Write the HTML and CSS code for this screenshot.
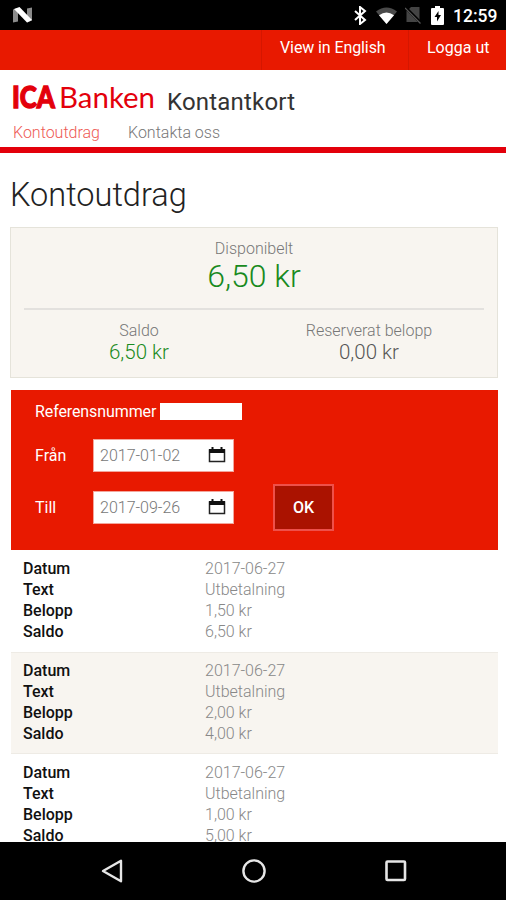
FILE: index.html
```html
<!DOCTYPE html>
<html lang="sv">
<head>
<meta charset="utf-8">
<title>Kontoutdrag</title>
<link rel="stylesheet" href="styles.css">
</head>
<body>
<div class="status">
  <svg class="status-n" width="20" height="16" viewBox="0 0 20 16"><path d="M0 2.500 5 1v13.500L0 15.500zM14 1.500l5-1v13l-5 2z" fill="#8b8b8b"/><path d="M1 2 6.500 0 19 13l-5 2.500z" fill="#fff"/></svg>
  <div class="status-icons">
    <svg width="13" height="19" viewBox="0 0 13 19"><path d="M1 5l10 9-5 4V1l5 4L1 14" fill="none" stroke="#fff" stroke-width="2"/></svg>
    <svg class="wifi" width="21" height="17" viewBox="0 0 21 17"><path d="M0 4.500Q10.500-3.500 21 4.500L10.500 17z" fill="#4a4a4a"/><path d="M3 8.200Q10.500 3 18 8.200L10.500 17z" fill="#fff"/></svg>
    <svg class="sim" width="17" height="18" viewBox="0 0 17 18"><path d="M6 1h8.500v15H1.500V5.500z" fill="#444"/><path d="M0 1l16 16" stroke="#000" stroke-width="3"/><path d="M0 2l15.500 15.500" stroke="#555" stroke-width="1.200"/></svg>
    <svg class="battery" width="13" height="19" viewBox="0 0 13 19"><path d="M4 0h5v2h3q1 0 1 1v15q0 1-1 1H1q-1 0-1-1V3q0-1 1-1h3z" fill="#fff"/><path d="M7.500 5 3.500 11h2.500v4.500l4-6.500H7.500z" fill="#000"/></svg>
    <span class="clock">12:59</span>
  </div>
</div>
<nav class="topbar">
  <a class="lang">View in English</a>
  <a class="logout">Logga ut</a>
</nav>
<header class="header">
  <div class="brand">
    <svg class="logo" width="144" height="36" viewBox="0 0 144 36"><text class="ica" x="0" y="25" textLength="43" lengthAdjust="spacingAndGlyphs">ICA</text><text class="banken" x="47" y="25" textLength="96" lengthAdjust="spacingAndGlyphs">Banken</text></svg>
    <span class="product">Kontantkort</span>
  </div>
  <div class="tabs"><a class="tab active">Kontoutdrag</a><a class="tab oss">Kontakta oss</a></div>
</header>
<main class="main">
  <h1 class="title">Kontoutdrag</h1>
  <section class="balance">
    <div class="available"><div class="label">Disponibelt</div><div class="amount big">6,50 kr</div></div>
    <div class="split">
      <div class="cell"><div class="label">Saldo</div><div class="amount">6,50 kr</div></div>
      <div class="cell"><div class="label wide">Reserverat belopp</div><div class="amount plain">0,00 kr</div></div>
    </div>
  </section>
  <section class="filter">
    <div class="ref"><span class="ref-label">Referensnummer</span><span class="ref-value"></span></div>
    <div class="field"><span class="name">Från</span>
      <span class="date">2017-01-02<svg width="18" height="18" viewBox="0 0 18 18"><path d="M1.500 4h15v11.500h-15z" fill="none" stroke="#222" stroke-width="1.500"/><path d="M1 3h16v4H1z" fill="#111"/><path d="M4.500 1v3M13.500 1v3" stroke="#111" stroke-width="2"/></svg></span></div>
    <div class="field second"><span class="name">Till</span>
      <span class="date">2017-09-26<svg width="18" height="18" viewBox="0 0 18 18"><path d="M1.500 4h15v11.500h-15z" fill="none" stroke="#222" stroke-width="1.500"/><path d="M1 3h16v4H1z" fill="#111"/><path d="M4.500 1v3M13.500 1v3" stroke="#111" stroke-width="2"/></svg></span>
      <button class="ok">OK</button></div>
  </section>
  <dl class="record"><dt>Datum</dt><dd>2017-06-27</dd><dt>Text</dt><dd class="desc">Utbetalning</dd><dt>Belopp</dt><dd>1,50 kr</dd><dt>Saldo</dt><dd>6,50 kr</dd></dl>
  <dl class="record alt"><dt>Datum</dt><dd>2017-06-27</dd><dt>Text</dt><dd class="desc">Utbetalning</dd><dt>Belopp</dt><dd>2,00 kr</dd><dt>Saldo</dt><dd>4,00 kr</dd></dl>
  <dl class="record"><dt>Datum</dt><dd>2017-06-27</dd><dt>Text</dt><dd class="desc">Utbetalning</dd><dt>Belopp</dt><dd>1,00 kr</dd><dt>Saldo</dt><dd>5,00 kr</dd></dl>
</main>
<footer class="navbar">
  <svg width="22" height="24" viewBox="0 0 22 24"><path d="M20 1.800v20.400L2 12z" fill="none" stroke="#e6e6e6" stroke-width="2.400" stroke-linejoin="round"/></svg>
  <svg width="24" height="24" viewBox="0 0 24 24"><circle cx="12" cy="12" r="10.600" fill="none" stroke="#e6e6e6" stroke-width="2.400"/></svg>
  <svg width="22" height="22" viewBox="0 0 22 22"><rect x="1.500" y="1.500" width="18.500" height="18.500" rx="1" fill="none" stroke="#e6e6e6" stroke-width="2.600"/></svg>
</footer>
</body>
</html>
```
FILE: styles.css
```css
* { box-sizing: border-box; }
body { margin: 0; height: 900px; display: flex; flex-direction: column; overflow: hidden; background: #fff; font-family: Roboto, "Liberation Sans", sans-serif; font-weight: 300; font-size: 16px; color: #222; }
.status { flex: none; height: 30px; background: #000; display: flex; align-items: center; justify-content: space-between; padding: 0 9px 0 13px; }
.status-icons { display: flex; align-items: center; }
.wifi { margin-left: 9px; }
.sim { margin-left: 8px; }
.battery { margin-left: 9px; }
.clock { width: 44px; margin-left: 9px; color: #fff; font-size: 17.500px; font-weight: 500; line-height: 30px; padding-top: 1px; }
.topbar { flex: none; height: 40px; background: #e81900; display: flex; justify-content: flex-end; color: #fff; font-weight: 400; line-height: 36px; }
.lang { width: 147px; padding-left: 18px; border-left: 1px solid #d51600; letter-spacing: -.1px; }
.logout { width: 98px; padding-left: 18px; border-left: 1px solid #d51600; }
.header { flex: none; height: 83px; border-bottom: 6px solid #e3000b; padding: 13px 12px 0; }
.brand { display: flex; height: 34px; }
.logo { flex: none; overflow: visible; }
.ica { font: 900 30px Lato, sans-serif; fill: #e3000b; stroke: #e3000b; stroke-width: 1.300px; }
.banken { font: 400 29px Lato, sans-serif; fill: #e3000b; }
.product { margin-left: 11px; font-size: 24px; line-height: 38px; font-weight: 400; color: #333; letter-spacing: .2px; }
.tabs { display: flex; line-height: 31px; color: #777; }
.tab { width: 116px; padding-left: 1px; }
.active { color: #ee5a54; }
.oss { padding-left: 0; }
.main { flex: 1; min-height: 0; overflow: hidden; padding: 0 8px 0 10px; }
.title { margin: 0; height: 74px; padding-top: 22px; font-size: 32.500px; line-height: 41px; font-weight: 300; letter-spacing: 0; }
.balance { height: 151px; border: 1px solid #e5e3da; background: #f8f5f0; padding: 10px 13px 0; text-align: center; }
.available { height: 72px; border-bottom: 2px solid #e3e1de; }
.label { line-height: 21px; color: #777; }
.amount { font-size: 20.500px; line-height: 23px; color: #188a20; }
.big { font-size: 32px; line-height: 35px; }
.plain { color: #555; }
.split { display: flex; padding-top: 10px; }
.cell { flex: 1; }
.filter { margin: 12px 0 0 1px; height: 160px; background: #e81900; padding: 11px 24px 0; color: #fff; font-weight: 400; }
.ref { display: flex; align-items: center; height: 20px; letter-spacing: -.1px; }
.ref-value { margin-left: 4px; width: 82px; height: 17px; background: #fff; margin-top: 1px; }
.field { display: flex; align-items: center; height: 46px; margin-top: 11px; }
.second { margin-top: 6px; }
.name { width: 58px; }
.date { display: flex; align-items: center; justify-content: space-between; width: 141px; height: 33px; padding: 0 7px 0 6px; background: #fff; border: 1px solid #f3a69c; color: #777; font-weight: 300; }
.ok { width: 61px; height: 47px; margin-left: 39px; padding: 0; border: 2px solid #ee504a; background: #aa1200; color: #fff; font: 500 16px Roboto, sans-serif; }
.record { margin: 0 0 0 1px; height: 102px; padding: 8px 12px 0; display: grid; grid-template-columns: 182px 1fr; grid-auto-rows: 21px; line-height: 21px; }
.alt { background: #f8f5f0; border: solid #eeebe5; border-width: 1px 0; padding-top: 7px; }
dt { font-weight: 500; color: #111; }
dd { margin: 0; color: #888; }
.navbar { flex: none; height: 58px; background: #000; display: flex; justify-content: space-between; align-items: center; padding: 0 99px 0 101px; }
```
